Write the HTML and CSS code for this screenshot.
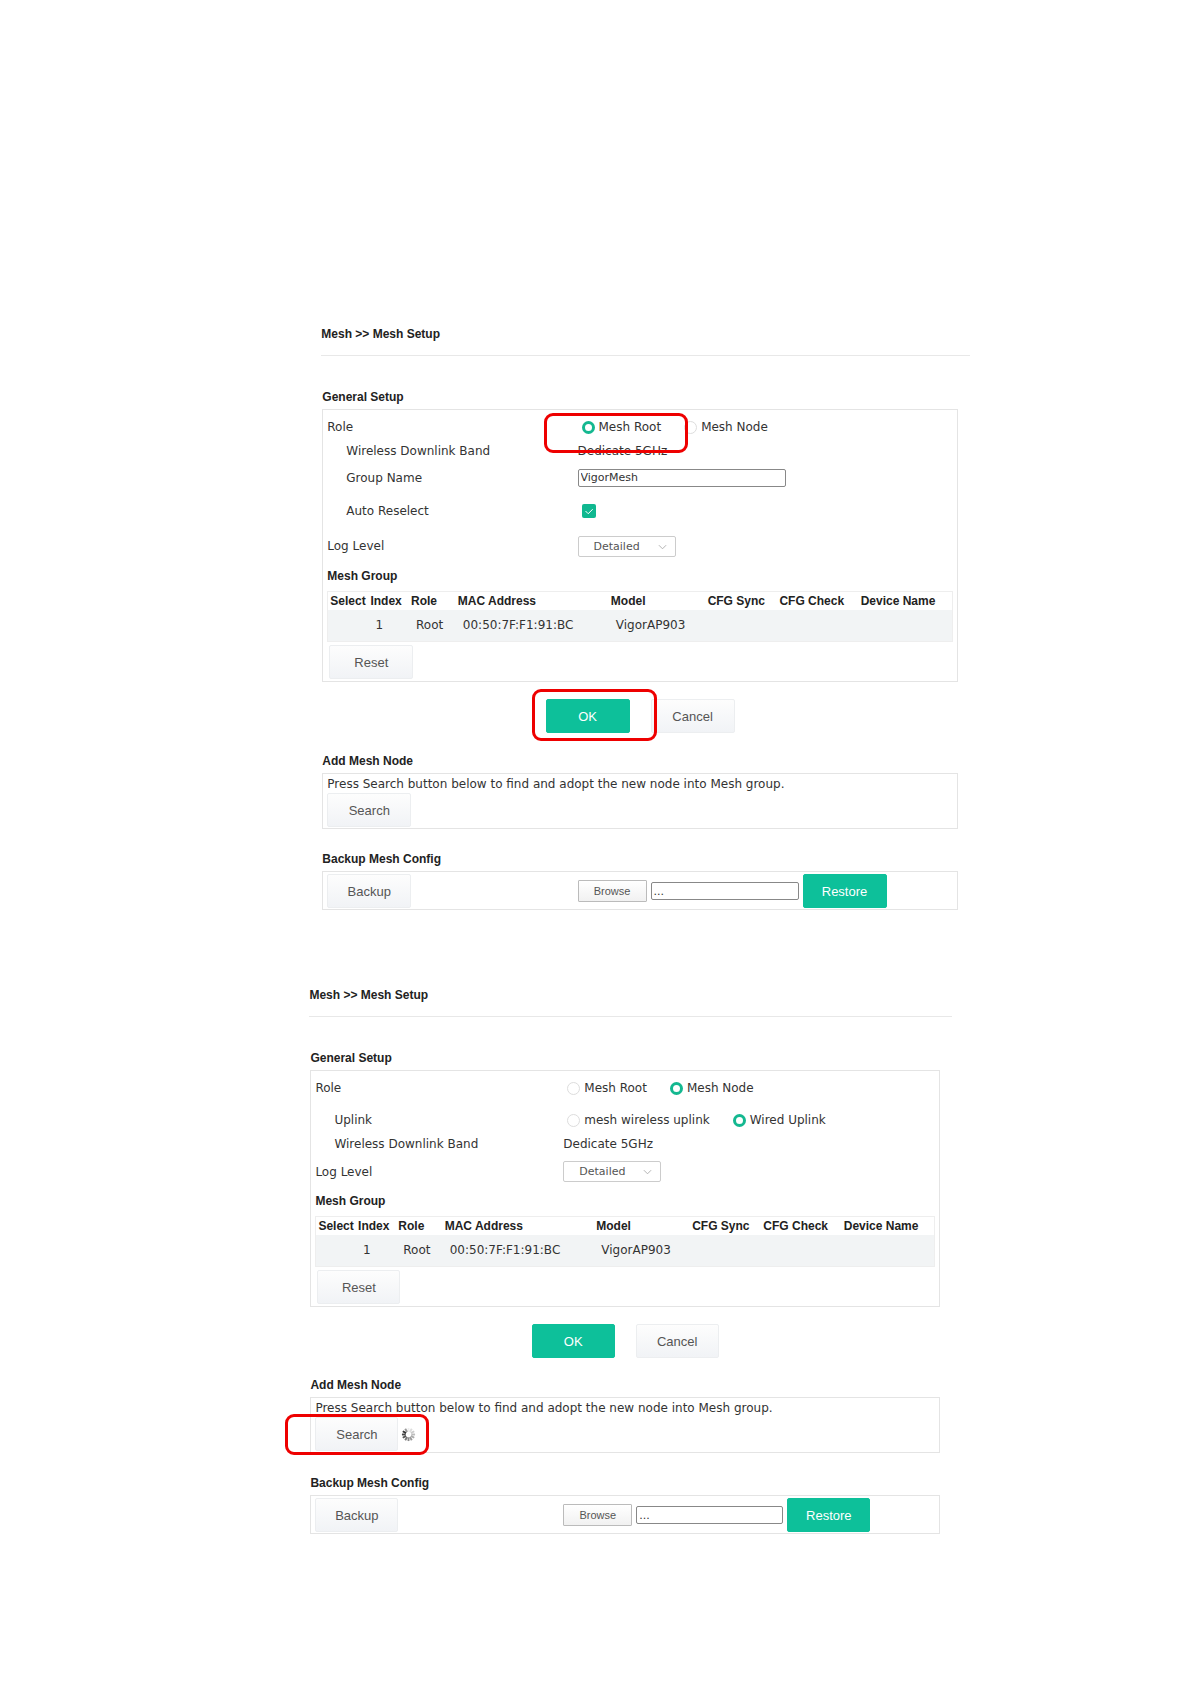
FILE: index.html
```
<!doctype html>
<html lang="en-US">
<head>
<meta charset="utf-8">
<title>Mesh Setup</title>
<link rel="stylesheet" href="styles.css">
</head>
<body>
<main>
<section class="setup setup-root">
<h1>Mesh &gt;&gt; Mesh Setup</h1>
<h2>General Setup</h2>
<div class="panel">
	<div class="row role">
		<span>Role</span>
		<div class="value radios">
			<label><input type="radio" name="role1" checked>Mesh Root</label>
			<label><input type="radio" name="role1">Mesh Node</label>
			<span class="mark mark-role"></span>
		</div>
	</div>
	<div class="row band">
		<span class="sub">Wireless Downlink Band</span>
		<span>Dedicate 5GHz</span>
	</div>
	<div class="row name">
		<label class="sub" for="group1">Group Name</label>
		<input type="text" class="text" id="group1" value="VigorMesh">
	</div>
	<div class="row auto">
		<label class="sub" for="auto1">Auto Reselect</label>
		<span class="check">
			<input type="checkbox" id="auto1" checked>
			<svg viewBox="0 0 14 14"><path d="M3.5 7l2.7 2.7 4.6-4.6"/></svg>
		</span>
	</div>
	<div class="row log">
		<label for="log1">Log Level</label>
		<span class="select">
			<select id="log1"><option>Detailed</option></select>
			<svg viewBox="0 0 10 6"><path d="M1 1l4 4 4-4"/></svg>
		</span>
	</div>
	<h3>Mesh Group</h3>
	<table>
	<thead>
	<tr><th class="c-select">Select</th><th class="c-index">Index</th><th class="c-role">Role</th><th class="c-mac">MAC Address</th><th class="c-model">Model</th><th class="c-sync">CFG Sync</th><th class="c-check">CFG Check</th><th>Device Name</th></tr>
	</thead>
	<tbody>
	<tr><td></td><td>1</td><td>Root</td><td>00:50:7F:F1:91:BC</td><td>VigorAP903</td><td></td><td></td><td></td></tr>
	</tbody>
	</table>
	<button type="button" class="btn reset">Reset</button>
</div>
<div class="actions">
	<div class="marked">
		<button type="button" class="btn green">OK</button>
		<span class="mark mark-ok"></span>
	</div>
	<button type="button" class="btn">Cancel</button>
</div>
<h2>Add Mesh Node</h2>
<div class="panel add">
	<p>Press Search button below to find and adopt the new node into Mesh group.</p>
	<button type="button" class="btn">Search</button>
</div>
<h2>Backup Mesh Config</h2>
<div class="panel backup">
	<div class="row">
		<button type="button" class="btn">Backup</button>
		<div class="value restore">
			<button type="button" class="browse">Browse</button>
			<input type="text" class="text file" value="..." aria-label="Config file">
			<button type="button" class="btn green">Restore</button>
		</div>
	</div>
</div>
</section>

<section class="setup setup-node">
<h1>Mesh &gt;&gt; Mesh Setup</h1>
<h2>General Setup</h2>
<div class="panel">
	<div class="row role">
		<span>Role</span>
		<div class="value radios">
			<label><input type="radio" name="role2">Mesh Root</label>
			<label><input type="radio" name="role2" checked>Mesh Node</label>
		</div>
	</div>
	<div class="row uplink">
		<span class="sub">Uplink</span>
		<div class="value radios">
			<label><input type="radio" name="uplink2">mesh wireless uplink</label>
			<label><input type="radio" name="uplink2" checked>Wired Uplink</label>
		</div>
	</div>
	<div class="row band">
		<span class="sub">Wireless Downlink Band</span>
		<span>Dedicate 5GHz</span>
	</div>
	<div class="row log">
		<label for="log2">Log Level</label>
		<span class="select">
			<select id="log2"><option>Detailed</option></select>
			<svg viewBox="0 0 10 6"><path d="M1 1l4 4 4-4"/></svg>
		</span>
	</div>
	<h3>Mesh Group</h3>
	<table>
	<thead>
	<tr><th class="c-select">Select</th><th class="c-index">Index</th><th class="c-role">Role</th><th class="c-mac">MAC Address</th><th class="c-model">Model</th><th class="c-sync">CFG Sync</th><th class="c-check">CFG Check</th><th>Device Name</th></tr>
	</thead>
	<tbody>
	<tr><td></td><td>1</td><td>Root</td><td>00:50:7F:F1:91:BC</td><td>VigorAP903</td><td></td><td></td><td></td></tr>
	</tbody>
	</table>
	<button type="button" class="btn reset">Reset</button>
</div>
<div class="actions">
	<button type="button" class="btn green">OK</button>
	<button type="button" class="btn">Cancel</button>
</div>
<h2>Add Mesh Node</h2>
<div class="panel add">
	<p>Press Search button below to find and adopt the new node into Mesh group.</p>
	<div class="marked">
		<button type="button" class="btn">Search</button>
		<svg class="spinner" viewBox="0 0 16 16">
			<path stroke="#444" d="M1 8h4"/>
			<path stroke="#555" d="M1.9 11.5l3.5-2"/>
			<path stroke="#777" d="M4.5 14.1l2-3.5"/>
			<path stroke="#888" d="M8 15v-4"/>
			<path stroke="#999" d="M11.5 14.1l-2-3.5"/>
			<path stroke="#aaa" d="M14.1 11.5l-3.5-2"/>
			<path stroke="#bbb" d="M15 8h-4"/>
			<path stroke="#ccc" d="M14.1 4.5l-3.5 2"/>
			<path stroke="#ddd" d="M11.5 1.9l-2 3.5"/>
			<path stroke="#eee" d="M8 1v4"/>
			<path stroke="#999" d="M4.5 1.9l2 3.5"/>
			<path stroke="#333" d="M1.9 4.5l3.5 2"/>
		</svg>
		<span class="mark mark-search"></span>
	</div>
</div>
<h2>Backup Mesh Config</h2>
<div class="panel backup">
	<div class="row">
		<button type="button" class="btn">Backup</button>
		<div class="value restore">
			<button type="button" class="browse">Browse</button>
			<input type="text" class="text file" value="..." aria-label="Config file">
			<button type="button" class="btn green">Restore</button>
		</div>
	</div>
</div>
</section>
</main>
</body>
</html>
```
FILE: styles.css
```
* {
	box-sizing: border-box;
}
body {
	margin: 0;
	background: #fff;
	color: #333;
	font-family: "DejaVu Sans", Verdana, sans-serif;
	font-size: 12px;
	line-height: 16px;
}
main {
	padding: 326px 0 100px;
}
.setup-root {
	width: 54.5%;
	margin-left: 27%;
}
.setup-node {
	width: 54%;
	margin: 77px 0 0 26%;
}
h1, h2, h3, p {
	margin: 0;
}
h1, h2, h3, th {
	font-family: "Liberation Sans", Arial, sans-serif;
	font-size: 12px;
	font-weight: bold;
	line-height: 16px;
	color: #222;
}
h1 {
	padding-bottom: 13px;
	border-bottom: 1px solid #e8e8e8;
	margin-bottom: 33px;
}
h2 {
	padding-left: 1px;
	margin-bottom: 4px;
}
.panel {
	width: 98%;
	border: 1px solid #e4e4e4;
	margin-left: 1px;
	padding: 0 4px 2px;
}
.row {
	display: grid;
	grid-template-columns: 40% 1fr;
	align-items: center;
}
.sub {
	padding-left: 19px;
}
.value {
	position: relative;
	display: flex;
	align-items: center;
}
.radios {
	gap: 23px;
	padding-left: 4px;
}
.radios label {
	display: flex;
	align-items: center;
	gap: 4px;
}

/* row heights */
.setup-root .panel:first-of-type {
	padding-top: 5px;
}
.setup-root .role, .setup-root .band {
	height: 24px;
}
.name {
	height: 29px;
}
.auto {
	height: 38px;
}
.setup-root .log {
	height: 32px;
}
.setup-root h3 {
	padding: 6px 0 7px;
}
.setup-node .role {
	height: 34px;
}
.uplink {
	height: 30px;
}
.setup-node .band {
	height: 18px;
}
.setup-node .log {
	height: 37px;
}
.setup-node h3 {
	padding: 3px 0 7px;
}

/* form controls */
input[type=radio] {
	appearance: none;
	width: 13px;
	height: 13px;
	margin: 0;
	border: 1px solid #ddd;
	border-radius: 50%;
	background: #fff;
}
input[type=radio]:checked {
	border: 3px solid #14b890;
}
.check {
	position: relative;
	display: flex;
	padding-left: 4px;
}
.check input {
	appearance: none;
	width: 14px;
	height: 14px;
	margin: 0;
	border-radius: 2px;
	background: #10b890;
}
.check svg {
	position: absolute;
	left: 4px;
	top: 0;
	width: 14px;
	height: 14px;
	fill: none;
	stroke: #fff;
	pointer-events: none;
}
.text {
	width: 208px;
	height: 18px;
	padding: 0 2px;
	border: 1px solid #888;
	border-radius: 2px;
	font-family: inherit;
	font-size: 11px;
	color: #333;
}
.select {
	position: relative;
	width: 98px;
	height: 21px;
}
select {
	appearance: none;
	display: block;
	width: 100%;
	height: 100%;
	padding: 0 15px;
	border: 1px solid #ccc;
	border-radius: 2px;
	background: #fff;
	font-family: inherit;
	font-size: 11px;
	color: #555;
}
.select svg {
	position: absolute;
	right: 9px;
	top: 8px;
	width: 9px;
	height: 6px;
	fill: none;
	stroke: #aaa;
	pointer-events: none;
}
.btn {
	display: block;
	width: 84px;
	height: 34px;
	padding: 0;
	border: 1px solid #eceef0;
	border-radius: 2px;
	background: linear-gradient(#fdfdfd, #f1f3f6);
	font-family: "Liberation Sans", Arial, sans-serif;
	font-size: 13px;
	color: #555;
}
.setup-node .btn {
	width: 83px;
}
.btn.green {
	border-color: #0dc09a;
	background: #0dc09a;
	color: #fff;
}
.browse {
	width: 69px;
	height: 22px;
	padding: 0;
	border: 1px solid #bbb;
	border-radius: 1px;
	background: linear-gradient(#fff, #f1f1f1);
	font-family: "Liberation Sans", Arial, sans-serif;
	font-size: 11px;
	color: #555;
}

/* mesh group table */
table {
	width: 100%;
	table-layout: fixed;
	border: 1px solid #eee;
	border-collapse: collapse;
	margin-bottom: 3px;
}
th, td {
	padding: 0 2px;
	text-align: left;
	white-space: nowrap;
}
th {
	height: 18px;
}
td {
	height: 32px;
	padding-left: 7px;
	background: #f2f4f5;
}
.c-select, .c-index {
	width: 6.5%;
}
.c-role {
	width: 7.5%;
}
.c-mac {
	width: 24.5%;
}
.c-model {
	width: 15.5%;
}
.c-sync {
	width: 11.5%;
}
.c-check {
	width: 13%;
}
.reset {
	margin-left: 2px;
}

.actions {
	display: flex;
	justify-content: center;
	gap: 21px;
	margin: 17px 11px 20px 0;
}
.setup-node .actions {
	margin-bottom: 19px;
}
.add {
	padding: 2px 4px 1px;
	margin-bottom: 22px;
}
.add p {
	padding-bottom: 1px;
}
.backup {
	padding: 2px 4px 1px;
}
.restore {
	gap: 4px;
}
.file {
	width: 148px;
}
.setup-node .file {
	width: 147px;
}

/* red highlight boxes */
.marked {
	position: relative;
	display: flex;
	align-items: center;
	gap: 3px;
}
.mark {
	position: absolute;
	border: 3px solid #ee0000;
	border-radius: 9px;
	pointer-events: none;
}
.mark-role {
	left: -34px;
	top: -6px;
	width: 144px;
	height: 40px;
}
.mark-ok {
	left: -14px;
	top: -10px;
	width: 125px;
	height: 52px;
}
.mark-search {
	left: -30px;
	top: -3px;
	width: 144px;
	height: 41px;
}
.spinner {
	width: 15px;
	height: 15px;
	stroke-width: 2;
}
```
